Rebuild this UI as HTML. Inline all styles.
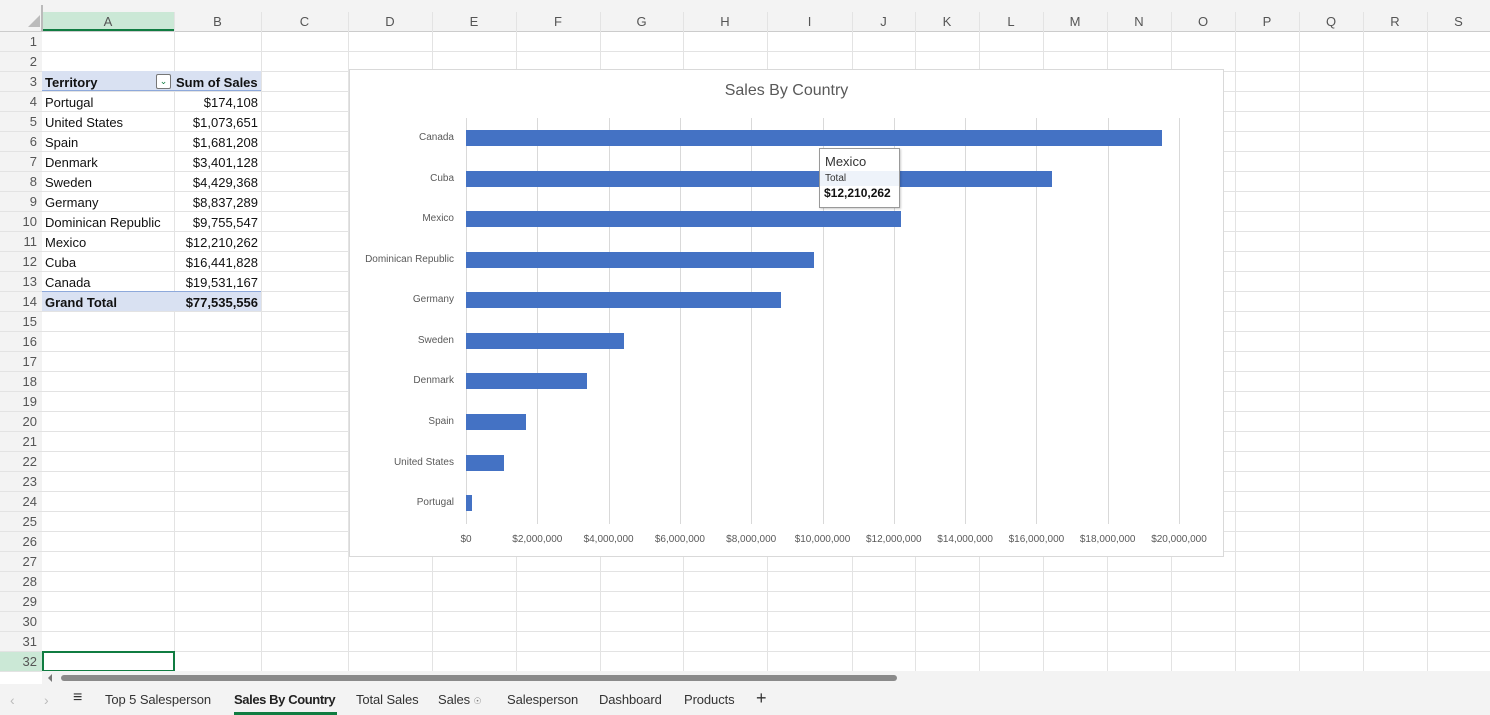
<!DOCTYPE html>
<html><head><style>
*{margin:0;padding:0;box-sizing:border-box}
body{width:1490px;height:715px;overflow:hidden;background:#fff;font-family:"Liberation Sans",sans-serif;position:relative;font-size:13px;color:#222}
.a{position:absolute}
.hl{position:absolute;height:1px;background:#e3e3e3}
.vl{position:absolute;width:1px;background:#e3e3e3}
.ch{position:absolute;top:12px;height:19px;text-align:center;color:#555;font-size:13px;line-height:19px}
.rh{position:absolute;left:0;width:41px;text-align:right;padding-right:4px;color:#555;font-size:13px;line-height:21px;height:20px}
.c{position:absolute;height:20px;line-height:21px;font-size:13px;color:#111}
.yl{position:absolute;right:1036px;font-size:10px;color:#595959;text-align:right;white-space:nowrap}
.xl{position:absolute;top:534px;font-size:10px;color:#595959;white-space:nowrap;transform:translateX(-50%)}
.bar{position:absolute;left:466px;height:16px;background:#4472c4}
.tab{position:absolute;top:692px;font-size:13px;color:#333;letter-spacing:-0.1px}
</style></head><body>
<div class="a" style="left:0;top:0;width:1490px;height:31px;background:#f3f3f3"></div>
<div class="a" style="left:0;top:0;width:42px;height:671px;background:#f3f3f3"></div>
<div class="a" style="left:42px;top:12px;width:132px;height:19px;background:#cbe8d6;border-bottom:2px solid #107c41"></div>
<div class="a" style="left:0;top:651px;width:42px;height:20px;background:#cbe8d6"></div>
<div class="a" style="left:41px;top:5px;width:2px;height:26px;background:#bbb"></div>
<div class="a" style="left:28px;top:15px;width:0;height:0;border-left:12px solid transparent;border-bottom:12px solid #bbb"></div>
<div class="hl" style="left:0;top:31px;width:1490px;background:#ccc"></div>
<div id="cols"></div>
<script>
var xs=[174,261,348,432,516,600,683,767,852,915,979,1043,1107,1171,1235,1299,1363,1427];
var L=["A","B","C","D","E","F","G","H","I","J","K","L","M","N","O","P","Q","R","S"];
var h="",prev=42;
xs.concat([1490]).forEach(function(x,i){h+='<div class="ch" style="left:'+prev+'px;width:'+(x-prev)+'px">'+L[i]+'</div>';if(x<1490)h+='<div class="vl" style="left:'+x+'px;top:12px;height:659px"></div>';prev=x;});
for(var r=1;r<=32;r++){var t=31+(r-1)*20;h+='<div class="rh" style="top:'+t+'px">'+r+'</div>';h+='<div class="hl" style="left:0;top:'+(t+20)+'px;width:1490px"></div>';}
document.getElementById("cols").innerHTML=h;
</script>
<div class="a" style="left:42px;top:71px;width:219px;height:20px;background:#d9e1f2;border-bottom:1px solid #8ea9db"></div>
<div class="a" style="left:42px;top:291px;width:219px;height:20px;background:#d9e1f2;border-top:1px solid #8ea9db"></div>
<div class="c" style="left:45px;top:72px;font-weight:bold">Territory</div>
<div class="a" style="left:156px;top:74px;width:15px;height:15px;border:1px solid #777;background:#fff;border-radius:2px;font-size:9px;color:#107c41;text-align:center;line-height:12px">&#8964;</div>
<div class="c" style="left:176px;top:72px;font-weight:bold">Sum of Sales</div>
<div id="piv"></div>
<script>
var d=[["Portugal","$174,108"],["United States","$1,073,651"],["Spain","$1,681,208"],["Denmark","$3,401,128"],["Sweden","$4,429,368"],["Germany","$8,837,289"],["Dominican Republic","$9,755,547"],["Mexico","$12,210,262"],["Cuba","$16,441,828"],["Canada","$19,531,167"],["Grand Total","$77,535,556"]];
var h="";d.forEach(function(e,i){var t=92+i*20,b=i==10?"font-weight:bold;":"";h+='<div class="c" style="left:45px;top:'+t+'px;'+b+'">'+e[0]+'</div><div class="c" style="left:174px;width:84px;text-align:right;top:'+t+'px;'+b+'">'+e[1]+'</div>';});
document.getElementById("piv").innerHTML=h;
</script>
<div class="a" style="left:349px;top:69px;width:875px;height:488px;background:#fff;border:1px solid #d9d9d9"></div>
<div class="a" style="left:349px;top:82px;width:875px;text-align:center;font-size:16px;color:#595959">Sales By Country</div>
<div id="ch"></div>
<script>
var h="";for(var i=0;i<=10;i++){var x=466+i*71.3;h+='<div class="vl" style="left:'+Math.round(x)+'px;top:118px;height:406px;background:#d9d9d9"></div>';h+='<div class="xl" style="left:'+x+'px">$'+(i==0?"0":(i*2)+",000,000")+'</div>';}
var n=[["Canada",19531167,138],["Cuba",16441828,179],["Mexico",12210262,219],["Dominican Republic",9755547,260],["Germany",8837289,300],["Sweden",4429368,341],["Denmark",3401128,381],["Spain",1681208,422],["United States",1073651,463],["Portugal",174108,503]];
n.forEach(function(e){h+='<div class="bar" style="top:'+(e[2]-8)+'px;width:'+Math.round(e[1]/20000000*713)+'px"></div><div class="yl" style="top:'+(e[2]-6)+'px">'+e[0]+'</div>';});
document.getElementById("ch").innerHTML=h;
</script>
<div class="a" style="left:819px;top:148px;width:81px;height:60px;background:#fff;border:1px solid #999;box-shadow:1px 1px 2px rgba(0,0,0,.2)">
<div style="padding:5px 0 0 5px;font-size:13px;color:#333;height:22px">Mexico</div>
<div style="background:#eef3fa;padding-left:5px;font-size:10px;height:15px;line-height:15px;color:#333">Total</div>
<div style="padding-left:4px;font-size:12px;font-weight:bold;color:#111">$12,210,262</div>
</div>
<div class="a" style="left:42px;top:651px;width:133px;height:21px;border:2px solid #107c41"></div>
<div class="a" style="left:42px;top:671px;width:1448px;height:13px;background:#f3f3f3"></div>
<div class="a" style="left:48px;top:674px;width:0;height:0;border-top:4px solid transparent;border-bottom:4px solid transparent;border-right:4px solid #777"></div>
<div class="a" style="left:61px;top:675px;width:836px;height:6px;background:#8a8a8a;border-radius:3px"></div>
<div class="a" style="left:0;top:684px;width:1490px;height:31px;background:#f3f3f3"></div>
<div class="tab" style="left:10px;color:#bbb;font-size:14px">&#8249;</div>
<div class="tab" style="left:44px;color:#bbb;font-size:14px">&#8250;</div>
<div class="tab" style="left:73px;font-size:16px;top:689px">&#8801;</div>
<div class="tab" style="left:105px">Top 5 Salesperson</div>
<div class="tab" style="left:234px;font-weight:bold;color:#222;letter-spacing:-0.4px">Sales By Country</div>
<div class="a" style="left:234px;top:712px;width:103px;height:3px;background:#107c41"></div>
<div class="tab" style="left:356px">Total Sales</div>
<div class="tab" style="left:438px">Sales <span style="font-size:9px;color:#777">&#9737;</span></div>
<div class="tab" style="left:507px">Salesperson</div>
<div class="tab" style="left:599px">Dashboard</div>
<div class="tab" style="left:684px">Products</div>
<div class="tab" style="left:756px;font-size:18px;top:688px">+</div>
</body></html>
